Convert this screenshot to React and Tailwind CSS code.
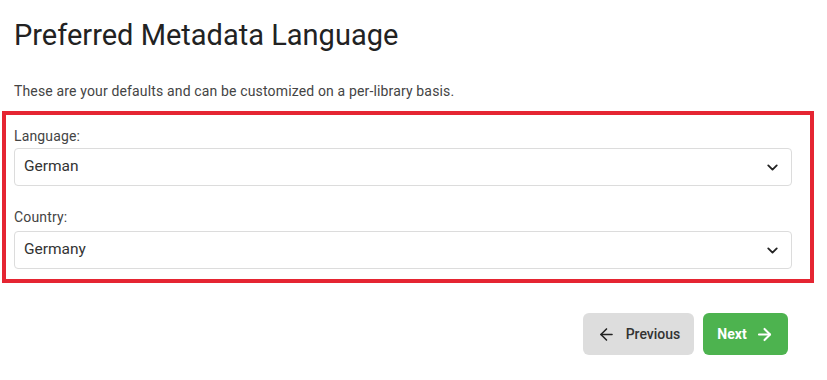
import { ArrowLeft, ArrowRight, ChevronDown } from 'lucide-react';

function SelectBox({ value }) {
    return (
        <div className="h-[38px] w-[778px] flex items-center justify-between pl-[9px] pr-[10px] border border-[#dcdcdc] rounded-[4px] bg-white">
            <span className="text-[15.5px] text-[#333]">{value}</span>
            <ChevronDown size={17} strokeWidth={2.6} className="text-[#222]" />
        </div>
    );
}

export default function App() {
    return (
        <div className="w-[827px] h-[380px] bg-white font-['Roboto','Liberation_Sans',sans-serif] overflow-hidden">
            <h1 className="pl-[14px] pt-[17px] text-[29px] leading-[36px] text-[#222] font-normal">
                Preferred Metadata Language
            </h1>
            <p className="pl-[14px] mt-[28px] text-[14px] tracking-[0.15px] leading-[20px] text-[#444]">
                These are your defaults and can be customized on a per-library basis.
            </p>

            {/* highlighted settings block */}
            <div className="ml-[2px] mt-[10px] w-[812px] border-4 border-[#e52532] pl-[8px] pt-[11px] pb-[10px]">
                <label className="block text-[14px] tracking-[0.15px] leading-[20px] text-[#444]">Language:</label>
                <div className="mt-[2px]">
                    <SelectBox value="German" />
                </div>
                <label className="block mt-[21px] text-[14px] tracking-[0.15px] leading-[20px] text-[#444]">Country:</label>
                <div className="mt-[4px]">
                    <SelectBox value="Germany" />
                </div>
            </div>

            <div className="flex justify-end gap-[9px] pr-[39px] mt-[30px]">
                <button className="h-[42px] w-[111px] flex items-center justify-center gap-[10px] rounded-[6px] bg-[#dddddd] text-[#333] text-[14px] font-medium">
                    <ArrowLeft size={19} strokeWidth={2} className="text-[#222]" />
                    Previous
                </button>
                <button className="h-[42px] w-[85px] flex items-center justify-center gap-[8px] rounded-[6px] bg-[#4db34f] text-white text-[14px] font-bold">
                    Next
                    <ArrowRight size={19} strokeWidth={2.6} />
                </button>
            </div>
        </div>
    );
}
